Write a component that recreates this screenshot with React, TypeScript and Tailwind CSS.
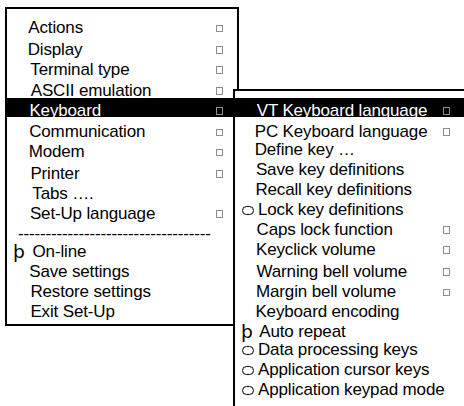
import React from "react";

const Box = () => (
  <span className="inline-block w-[7px] h-[7.5px] mt-[6.5px] border border-[#8c8c8c] shrink-0" />
);

const Circle = () => (
  <span className="inline-block w-[12px] h-[9px] mt-[6.5px] rounded-full border-[1.5px] border-black shrink-0" />
);

const Thorn = ({ w }: { w: string }) => (
  <span className={`${w} shrink-0`}>
    <span
      className="inline-block origin-left scale-x-110 text-[17px]"
      style={{ fontFamily: '"DejaVu Sans", sans-serif' }}
    >
      þ
    </span>
  </span>
);

type Row = {
  t: string;
  row: string;
  pl: string;
  box?: boolean;
  hi?: boolean;
  mark?: "thorn" | "circle";
};

const leftRows: Row[] = [
  { t: "Actions", row: "h-[21.7px]", pl: "pl-[21.3px]", box: true },
  { t: "Display", row: "h-[20.3px]", pl: "pl-[20.7px]", box: true },
  { t: "Terminal type", row: "h-[20.7px]", pl: "pl-[23.3px]", box: true },
  { t: "ASCII emulation", row: "h-[17px]", pl: "pl-[23.7px]", box: true },
  { t: "Keyboard", row: "h-[19.6px] pt-[3px]", pl: "pl-[22.4px]", box: true, hi: true },
  { t: "Communication", row: "h-[25px] pt-[5px]", pl: "pl-[22.2px]", box: true },
  { t: "Modem", row: "h-[21.7px]", pl: "pl-[21.7px]", box: true },
  { t: "Printer", row: "h-[20px]", pl: "pl-[23.4px]", box: true },
  { t: "Tabs ….", row: "h-[20px]", pl: "pl-[25.3px]" },
  { t: "Set-Up language", row: "h-[19.6px]", pl: "pl-[22.9px]", box: true },
  { t: "-----------------------------------", row: "h-[18.7px]", pl: "pl-[10.9px]" },
  { t: "On-line", row: "h-[20px]", pl: "pl-[5.5px]", mark: "thorn" },
  { t: "Save settings", row: "h-[20px]", pl: "pl-[22.2px]" },
  { t: "Restore settings", row: "h-[20px]", pl: "pl-[23.4px]" },
  { t: "Exit Set-Up", row: "h-[20px]", pl: "pl-[23.4px]" },
];

const rightRows: Row[] = [
  { t: "VT Keyboard language", row: "h-[19.6px] pt-[3px]", pl: "pl-[21.7px]", box: true, hi: true },
  { t: "PC Keyboard language", row: "h-[22.7px] pt-[4.4px]", pl: "pl-[19.7px]", box: true },
  { t: "Define key …", row: "h-[20px]", pl: "pl-[19.7px]" },
  { t: "Save key definitions", row: "h-[20px]", pl: "pl-[20.9px]" },
  { t: "Recall key definitions", row: "h-[20px]", pl: "pl-[20.4px]" },
  { t: "Lock key definitions", row: "h-[20px]", pl: "pl-[6.7px]", mark: "circle" },
  { t: "Caps lock function", row: "h-[20px]", pl: "pl-[21.5px]", box: true },
  { t: "Keyclick volume", row: "h-[21.7px]", pl: "pl-[21px]", box: true },
  { t: "Warning bell volume", row: "h-[20.6px]", pl: "pl-[21.5px]", box: true },
  { t: "Margin bell volume", row: "h-[19.4px]", pl: "pl-[21px]", box: true },
  { t: "Keyboard encoding", row: "h-[20.6px]", pl: "pl-[20.4px]" },
  { t: "Auto repeat", row: "h-[17.7px]", pl: "pl-[5.5px]", mark: "thorn" },
  { t: "Data processing keys", row: "h-[20px]", pl: "pl-[6.7px]", mark: "circle" },
  { t: "Application cursor keys", row: "h-[20px]", pl: "pl-[6.7px]", mark: "circle" },
  { t: "Application keypad mode", row: "h-[20px]", pl: "pl-[6.7px]", mark: "circle" },
];

export default function App() {
  return (
    <div
      className="w-[464px] h-[406px] overflow-hidden bg-white text-black text-[17px] tracking-[-0.15px]"
      style={{ fontFamily: '"Liberation Sans", Arial, sans-serif' }}
    >
      <div className="flex items-start">
        {/* Left menu */}
        <div className="ml-[5px] mt-[7px] w-[234px] shrink-0 border-2 border-black pt-[9px] pb-[1.7px]">
          {leftRows.map((r, i) => (
            <div
              key={i}
              className={`${r.row} whitespace-nowrap ${r.hi ? "bg-black text-white" : ""}`}
            >
              <div className="flex items-start h-[20px] leading-[20px]">
                <div className={`w-[209px] shrink-0 flex items-start ${r.pl}`}>
                  {r.mark === "thorn" && <Thorn w="w-[20px]" />}
                  <span>{r.t}</span>
                </div>
                {r.box && <Box />}
              </div>
            </div>
          ))}
        </div>
        {/* Right submenu */}
        <div className="relative mt-[89px] -ml-[6px] w-[240px] h-[330px] shrink-0 bg-white border-t-2 border-l-2 border-black pt-[6.7px]">
          {rightRows.map((r, i) => (
            <div
              key={i}
              className={`${r.row} whitespace-nowrap ${r.hi ? "bg-black text-white" : ""}`}
            >
              <div className="flex items-start h-[20px] leading-[20px]">
                <div className={`w-[207.7px] shrink-0 flex items-start ${r.pl}`}>
                  {r.mark === "circle" && (
                    <span className="w-[16.3px] shrink-0 flex">
                      <Circle />
                    </span>
                  )}
                  {r.mark === "thorn" && <Thorn w="w-[18.8px]" />}
                  <span>{r.t}</span>
                </div>
                {r.box && <Box />}
              </div>
            </div>
          ))}
        </div>
      </div>
    </div>
  );
}
